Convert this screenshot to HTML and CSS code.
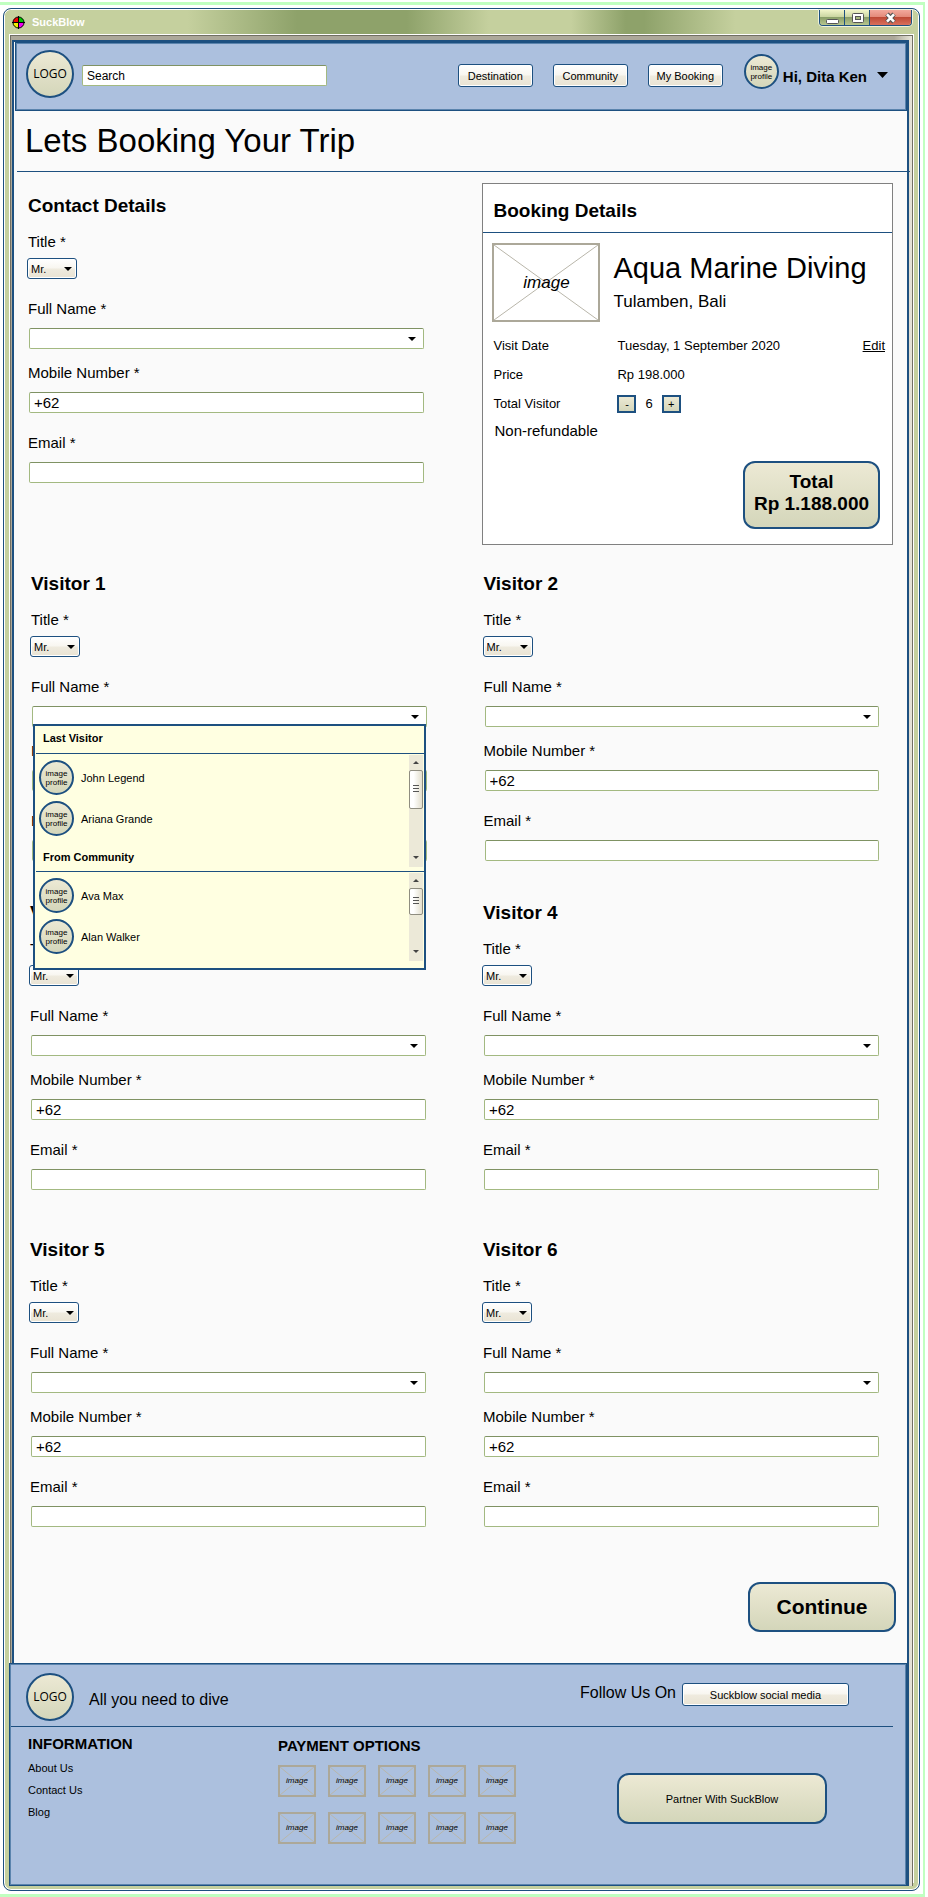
FILE: index.html
```html
<!DOCTYPE html>
<html lang="en">
<head>
<meta charset="utf-8">
<meta name="viewport" content="width=device-width, initial-scale=1">
<title>SuckBlow</title>
<link rel="stylesheet" href="styles.css">
</head>
<body>
<div class="canvas">
<div class="window">
  <div class="titlebar">
    <svg class="app-icon" width="13" height="13" viewBox="0 0 13 13" aria-hidden="true">
      <path d="M6.5 6.5V1A5.5 5.5 0 0 0 1 6.5Z" fill="#f00000"/>
      <path d="M6.5 6.5V1A5.5 5.5 0 0 1 12 6.5Z" fill="#00c800"/>
      <path d="M6.5 6.5V12A5.5 5.5 0 0 1 1 6.5Z" fill="#f0f000"/>
      <path d="M6.5 6.5V12A5.5 5.5 0 0 0 12 6.5Z" fill="#f000f0"/>
      <circle cx="6.5" cy="6.5" r="5.5" fill="none" stroke="#000"/>
      <path d="M6.5 0V13M0 6.5H13" stroke="#000"/>
    </svg>
    <span class="window-title">SuckBlow</span>
    <div class="window-buttons">
      <button class="wbtn" type="button" aria-label="Minimize"><svg width="13" height="13" viewBox="0 0 13 13"><rect x=".5" y="8.5" width="12" height="4" rx="1" fill="#fff" stroke="#555"/></svg></button>
      <button class="wbtn" type="button" aria-label="Maximize"><svg width="13" height="13" viewBox="0 0 13 13"><rect x="1.5" y="2.5" width="11" height="9" rx="1" fill="#fff" stroke="#555"/><rect x="4.5" y="5.500" width="5" height="3" fill="#a9b97f" stroke="#555"/></svg></button>
      <button class="wbtn wbtn-close" type="button" aria-label="Close"><svg width="13" height="13" viewBox="0 0 13 13"><path d="M3 3l7 8M10 3l-7 8" stroke="#555" stroke-width="4.600"/><path d="M3 3.400l7 7.200M10 3.400l-7 7.200" stroke="#fff" stroke-width="2.600"/></svg></button>
    </div>
  </div>

  <div class="frame"><div class="bevel"><div class="page">
    <header class="header">
      <a class="logo" href="#">LOGO</a>
      <input class="field search" type="text" value="Search" aria-label="Search">
      <nav class="nav">
        <button class="btn" type="button">Destination</button>
        <button class="btn" type="button">Community</button>
        <button class="btn" type="button">My Booking</button>
      </nav>
      <span class="avatar header-avatar">image<br>profile</span>
      <button class="account" type="button">Hi, Dita Ken <svg width="11" height="6" viewBox="0 0 11 6" aria-hidden="true"><path d="M0 0H11L5.500 6Z"/></svg></button>
    </header>

    <h1 class="page-title">Lets Booking Your Trip</h1>

    <main>
      <div class="overview">
        <section class="group">
          <h2>Contact Details</h2>
          <label for="c-title">Title *</label>
          <span class="pick pick-small"><select id="c-title"><option>Mr.</option></select></span>
          <label for="c-name">Full Name *</label>
          <span class="pick"><select id="c-name" class="field"><option></option></select></span>
          <label class="near" for="c-mobile">Mobile Number *</label>
          <input class="field" id="c-mobile" type="tel" value="+62">
          <label for="c-email">Email *</label>
          <input class="field" id="c-email" type="email">
        </section>

        <section class="card">
          <h2>Booking Details</h2>
          <div class="card-body">
            <div class="product">
              <div class="placeholder product-image"><svg aria-hidden="true"><line x1="0" y1="0" x2="100%" y2="100%"/><line x1="0" y1="100%" x2="100%" y2="0"/></svg><span>image</span></div>
              <div class="product-text">
                <h3>Aqua Marine Diving</h3>
                <p>Tulamben, Bali</p>
              </div>
            </div>
            <dl class="details">
              <dt>Visit Date</dt><dd>Tuesday, 1 September 2020 <a href="#">Edit</a></dd>
              <dt>Price</dt><dd>Rp 198.000</dd>
              <dt>Total Visitor</dt><dd class="stepper"><button type="button" aria-label="Fewer">-</button><span>6</span><button type="button" aria-label="More">+</button></dd>
            </dl>
            <p class="note">Non-refundable</p>
            <div class="plate total">Total<br>Rp 1.188.000</div>
          </div>
        </section>
      </div>

      <div class="visitors">
        <section class="group">
          <h2>Visitor 1</h2>
          <label for="v1-title">Title *</label>
          <span class="pick pick-small"><select id="v1-title"><option>Mr.</option></select></span>
          <label for="v1-name">Full Name *</label>
          <div class="with-menu">
            <span class="pick"><select id="v1-name" class="field"><option></option></select></span>
            <div class="menu">
              <h3>Last Visitor</h3>
              <div class="menu-row">
                <div class="menu-list">
                  <ul>
                    <li><span class="avatar">image<br>profile</span>John Legend</li>
                    <li><span class="avatar">image<br>profile</span>Ariana Grande</li>
                  </ul>
                  <h3>From Community</h3>
                </div>
                <div class="scrollbar"><i class="up"></i><i class="thumb"></i><i class="down"></i></div>
              </div>
              <div class="menu-row menu-row-last">
                <div class="menu-list">
                  <ul>
                    <li><span class="avatar">image<br>profile</span>Ava Max</li>
                    <li><span class="avatar">image<br>profile</span>Alan Walker</li>
                  </ul>
                </div>
                <div class="scrollbar scrollbar-short"><i class="up"></i><i class="thumb"></i><i class="down"></i></div>
              </div>
            </div>
          </div>
          <label class="near" for="v1-mobile">Mobile Number *</label>
          <input class="field" id="v1-mobile" type="tel" value="+62">
          <label for="v1-email">Email *</label>
          <input class="field" id="v1-email" type="email">
        </section>
        <section class="group">
          <h2>Visitor 2</h2>
          <label for="v2-title">Title *</label>
          <span class="pick pick-small"><select id="v2-title"><option>Mr.</option></select></span>
          <label for="v2-name">Full Name *</label>
          <span class="pick"><select id="v2-name" class="field"><option></option></select></span>
          <label class="near" for="v2-mobile">Mobile Number *</label>
          <input class="field" id="v2-mobile" type="tel" value="+62">
          <label for="v2-email">Email *</label>
          <input class="field" id="v2-email" type="email">
        </section>
      </div>

      <div class="visitors visitors-mid">
        <section class="group">
          <h2>Visitor 3</h2>
          <label for="v3-title">Title *</label>
          <span class="pick pick-small"><select id="v3-title"><option>Mr.</option></select></span>
          <label for="v3-name">Full Name *</label>
          <span class="pick"><select id="v3-name" class="field"><option></option></select></span>
          <label class="near" for="v3-mobile">Mobile Number *</label>
          <input class="field" id="v3-mobile" type="tel" value="+62">
          <label for="v3-email">Email *</label>
          <input class="field" id="v3-email" type="email">
        </section>
        <section class="group">
          <h2>Visitor 4</h2>
          <label for="v4-title">Title *</label>
          <span class="pick pick-small"><select id="v4-title"><option>Mr.</option></select></span>
          <label for="v4-name">Full Name *</label>
          <span class="pick"><select id="v4-name" class="field"><option></option></select></span>
          <label class="near" for="v4-mobile">Mobile Number *</label>
          <input class="field" id="v4-mobile" type="tel" value="+62">
          <label for="v4-email">Email *</label>
          <input class="field" id="v4-email" type="email">
        </section>
      </div>

      <div class="visitors visitors-last">
        <section class="group">
          <h2>Visitor 5</h2>
          <label for="v5-title">Title *</label>
          <span class="pick pick-small"><select id="v5-title"><option>Mr.</option></select></span>
          <label for="v5-name">Full Name *</label>
          <span class="pick"><select id="v5-name" class="field"><option></option></select></span>
          <label class="near" for="v5-mobile">Mobile Number *</label>
          <input class="field" id="v5-mobile" type="tel" value="+62">
          <label for="v5-email">Email *</label>
          <input class="field" id="v5-email" type="email">
        </section>
        <section class="group">
          <h2>Visitor 6</h2>
          <label for="v6-title">Title *</label>
          <span class="pick pick-small"><select id="v6-title"><option>Mr.</option></select></span>
          <label for="v6-name">Full Name *</label>
          <span class="pick"><select id="v6-name" class="field"><option></option></select></span>
          <label class="near" for="v6-mobile">Mobile Number *</label>
          <input class="field" id="v6-mobile" type="tel" value="+62">
          <label for="v6-email">Email *</label>
          <input class="field" id="v6-email" type="email">
        </section>
      </div>

      <div class="actions"><button class="plate continue" type="button">Continue</button></div>
    </main>

    <footer class="footer">
      <div class="footer-top">
        <a class="logo" href="#">LOGO</a>
        <p class="tagline">All you need to dive</p>
        <p class="follow">Follow Us On</p>
        <button class="btn btn-social" type="button">Suckblow social media</button>
      </div>
      <div class="footer-main">
        <nav class="info">
          <h3>INFORMATION</h3>
          <a href="#">About Us</a>
          <a href="#">Contact Us</a>
          <a href="#">Blog</a>
        </nav>
        <section class="payment">
          <h3>PAYMENT OPTIONS</h3>
          <div class="payment-grid">
            <div class="placeholder"><svg aria-hidden="true"><line x1="0" y1="0" x2="100%" y2="100%"/><line x1="0" y1="100%" x2="100%" y2="0"/></svg><span>image</span></div>
            <div class="placeholder"><svg aria-hidden="true"><line x1="0" y1="0" x2="100%" y2="100%"/><line x1="0" y1="100%" x2="100%" y2="0"/></svg><span>image</span></div>
            <div class="placeholder"><svg aria-hidden="true"><line x1="0" y1="0" x2="100%" y2="100%"/><line x1="0" y1="100%" x2="100%" y2="0"/></svg><span>image</span></div>
            <div class="placeholder"><svg aria-hidden="true"><line x1="0" y1="0" x2="100%" y2="100%"/><line x1="0" y1="100%" x2="100%" y2="0"/></svg><span>image</span></div>
            <div class="placeholder"><svg aria-hidden="true"><line x1="0" y1="0" x2="100%" y2="100%"/><line x1="0" y1="100%" x2="100%" y2="0"/></svg><span>image</span></div>
            <div class="placeholder"><svg aria-hidden="true"><line x1="0" y1="0" x2="100%" y2="100%"/><line x1="0" y1="100%" x2="100%" y2="0"/></svg><span>image</span></div>
            <div class="placeholder"><svg aria-hidden="true"><line x1="0" y1="0" x2="100%" y2="100%"/><line x1="0" y1="100%" x2="100%" y2="0"/></svg><span>image</span></div>
            <div class="placeholder"><svg aria-hidden="true"><line x1="0" y1="0" x2="100%" y2="100%"/><line x1="0" y1="100%" x2="100%" y2="0"/></svg><span>image</span></div>
            <div class="placeholder"><svg aria-hidden="true"><line x1="0" y1="0" x2="100%" y2="100%"/><line x1="0" y1="100%" x2="100%" y2="0"/></svg><span>image</span></div>
            <div class="placeholder"><svg aria-hidden="true"><line x1="0" y1="0" x2="100%" y2="100%"/><line x1="0" y1="100%" x2="100%" y2="0"/></svg><span>image</span></div>
          </div>
        </section>
        <button class="plate partner" type="button">Partner With SuckBlow</button>
      </div>
    </footer>
  </div></div></div>
</div>
</div>
</body>
</html>
```
FILE: styles.css
```css
:root {
  --navy: #1d5080;
  --navy-soft: #5b84ad;
  --olive: #c5d09e;
  --blue: #acc0de;
  --stone: #aca899;
  --beige: linear-gradient(#ece9d4, #d4d6ba);
  --button: linear-gradient(#fff 0%, #f8f6f0 48%, #efebdf 52%, #e9e3d3 100%);
}

* { box-sizing: border-box; }

body {
  margin: 0;
  background: #fff;
  color: #000;
  font-family: "Liberation Sans", Arial, sans-serif;
  font-size: 15px;
  line-height: 20px;
}

h1, h2, h3, p, dl, dd, ul { margin: 0; padding: 0; }
ul { list-style: none; }
button, input, select { margin: 0; color: inherit; font: inherit; }
a { color: inherit; text-decoration: none; }

/* window chrome */
.canvas {
  margin: 2px 3px 0 0;
  padding: 3px;
  border: 3px solid #c0ffc0;
  border-left: 0;
  border-right-width: 2px;
}

.window {
  padding: 1px;
  border: 1px solid var(--navy);
  border-radius: 8px;
  background: var(--olive);
  box-shadow: inset 0 0 0 1px #fff;
}

.titlebar {
  display: flex;
  align-items: center;
  height: 24px;
  padding: 0 6px 0 7px;
  border-radius: 6px 6px 0 0;
  background: linear-gradient(90deg, var(--olive) 0 20%, #8ea26a 32% 44%, var(--olive) 53% 62%, #8ea26a 68% 70%, var(--olive) 80%);
}

.window-title {
  margin-left: 7px;
  color: #fff;
  font-size: 11px;
  font-weight: bold;
}

.window-buttons {
  display: flex;
  align-self: flex-start;
  margin-left: auto;
  border: 1px solid var(--navy);
  border-top: 0;
  border-radius: 0 0 4px 4px;
  overflow: hidden;
  box-shadow: 0 0 0 1px #eef2dc;
}

.wbtn {
  display: grid;
  place-items: center;
  width: 25px;
  height: 15px;
  padding: 0;
  border: 0;
  border-right: 1px solid var(--navy);
  background: linear-gradient(#f1f5c9 0%, #cbd6a2 45%, #8ba069 50%, #b7c68e 100%);
}

.wbtn-close {
  width: 41px;
  border-right: 0;
  background: linear-gradient(#f2a99c 0%, #e48a7a 45%, #bf4a36 50%, #d9705c 100%);
}

.frame {
  margin: 0 4px 6px;
  border: 1px solid #fff;
}

.bevel {
  padding: 4px 3px 0 1px;
  border: 1px solid #716f64;
  border-bottom: 0;
  background: linear-gradient(90deg, var(--stone) 98%, #e8e6da);
}

.page {
  border: 2px solid var(--navy);
  border-bottom: 0;
  background: #fafafa;
}

/* shared controls */
.logo, .avatar {
  display: grid;
  flex: none;
  place-items: center;
  border: 2px solid var(--navy);
  border-radius: 50%;
  background: var(--beige);
  text-align: center;
}

.logo {
  width: 48px;
  height: 48px;
  font-family: "Open Sans", sans-serif;
  font-size: 12px;
}

.avatar {
  width: 35px;
  height: 35px;
  font-size: 8px;
  line-height: 9px;
}

.btn {
  width: 75px;
  height: 23px;
  padding: 0;
  border: 1px solid var(--navy);
  border-radius: 3px;
  background: var(--button);
  box-shadow: inset 0 0 0 1px #fff;
  font-size: 11px;
}

.plate {
  border: 2px solid var(--navy);
  border-radius: 12px;
  background: var(--beige);
  text-align: center;
}

.field {
  width: 100%;
  height: 21px;
  padding: 0 4px;
  border: 1px solid #a3b981;
  border-top-color: #7f9263;
  border-radius: 2px;
  background: #fff;
}

.pick {
  display: grid;
  align-items: center;
}

.pick select, .pick::after { grid-area: 1 / 1; }

.pick select {
  appearance: none;
  border-radius: 2px;
}

.pick::after {
  content: "";
  justify-self: end;
  margin-right: 8px;
  border: 4px solid transparent;
  border-top-color: #000;
  border-bottom: 0;
  pointer-events: none;
}

.pick-small { width: 50px; }
.pick-small::after { margin-right: 5px; }

.pick-small select {
  height: 21px;
  padding: 0 3px;
  border: 1px solid var(--navy);
  border-radius: 3px;
  background: var(--button);
  box-shadow: inset 0 0 0 1px #fff;
  font-size: 11px;
}

.placeholder {
  display: grid;
  place-items: center;
  border: 2px solid var(--stone);
  font-size: 8px;
  font-style: italic;
}

.placeholder svg, .placeholder span { grid-area: 1 / 1; }
.placeholder svg { width: 100%; height: 100%; }
.placeholder line { stroke: #b9b6aa; }

/* header */
.header {
  display: flex;
  align-items: center;
  height: 69px;
  margin-left: 1px;
  padding: 0 18px 6px 10px;
  border: 1px solid var(--navy);
  background: var(--blue);
  box-shadow: inset 0 0 0 1px var(--navy-soft);
}

.search {
  width: 245px;
  margin: 4px 20px 0 8px;
  font-size: 12px;
}

.nav {
  display: flex;
  gap: 20px;
  margin: 4px 21px 0 auto;
}

.header-avatar { margin-bottom: 4px; }

.account {
  display: flex;
  align-items: center;
  gap: 10px;
  margin-top: 6px;
  padding: 0 0 0 4px;
  border: 0;
  background: none;
  font-weight: bold;
}

.account svg { margin-bottom: 4px; }

.page-title {
  margin: 0 -3px 0 3px;
  padding: 12px 8px;
  border-bottom: 1px solid var(--navy);
  font-size: 33px;
  font-weight: normal;
  line-height: 36px;
}

/* forms */
.overview {
  display: grid;
  grid-template-columns: 397fr 410fr;
  gap: 58px;
  padding: 11px 14px 27px 13px;
}

.overview .group { padding-top: 11px; }

.visitors {
  display: grid;
  grid-template-columns: 1fr 1fr;
  gap: 56px;
  padding: 0 28px 0 16px;
}

.visitors-mid { padding-top: 40px; padding-left: 15px; }
.visitors-last { padding-top: 48px; padding-left: 15px; }

.group {
  display: flex;
  flex-direction: column;
}

h2 {
  font-size: 19px;
  line-height: 24px;
}

.group h2, .group label { padding-left: 1px; }
.group h2 { margin-bottom: 14px; }
.group label { margin-bottom: 9px; }
.group h2 + label { margin-bottom: 6px; }
.group label:not(h2 + label) { margin-top: 20px; }
.group label.near:not(h2 + label) { margin-top: 14px; }
.group > .field, .group > .pick:not(.pick-small), .with-menu { margin-left: 2px; width: auto; }

/* visitor picker */
.with-menu { position: relative; }

.menu {
  position: absolute;
  z-index: 2;
  top: 18px;
  right: 1px;
  left: 1px;
  border: 2px solid var(--navy);
  background: #ffffe1;
  font-size: 11px;
}

.menu h3 {
  padding: 2px 8px 5px;
  font-size: 11px;
  line-height: 20px;
}

.menu-row {
  display: flex;
  justify-content: space-between;
  margin-left: 1px;
  padding: 1px 1px 4px 0;
  border-top: 1px solid var(--navy);
}

.menu-row-last { padding-bottom: 7px; }

.menu-list ul {
  display: grid;
  gap: 6px;
  padding: 5px 0 3px 3px;
}

.menu-list li {
  display: flex;
  align-items: center;
  gap: 7px;
}

.menu-list h3 { padding: 8px 7px 0; }

.scrollbar {
  display: flex;
  flex-direction: column;
  align-items: center;
  width: 14px;
  height: 112px;
  background: #ece9d8;
}

.scrollbar-short { height: 88px; }

.up, .down { border: 3px solid transparent; }
.up { margin: 6px 0; border-top: 0; border-bottom-color: #444; }
.down { margin: auto 0 8px; border-bottom: 0; border-top-color: #444; }

.thumb {
  width: 14px;
  height: 39px;
  border: 1px solid #8f8d80;
  border-radius: 2px;
  background:
    repeating-linear-gradient(#555 0 1px, transparent 1px 3px) center / 6px 9px no-repeat,
    linear-gradient(90deg, #fff 30%, #e3dfcd);
}

.scrollbar-short .thumb { height: 27px; }

/* booking summary */
.card {
  border: 1px solid #808080;
  background: #fff;
}

.card h2 {
  padding: 15px 10px 9px;
  border-bottom: 1px solid var(--navy);
}

.card-body { padding: 10px 7px 15px 9px; }

.product { display: flex; gap: 13px; }

.product-image {
  flex: none;
  width: 108px;
  height: 79px;
  font-size: 17px;
}

.product-text { padding-top: 9px; }

.product h3 {
  margin-bottom: 8px;
  font-size: 29px;
  font-weight: normal;
  line-height: 32px;
  white-space: nowrap;
}

.product p { font-size: 17px; }

.details {
  display: grid;
  grid-template-columns: 124px 1fr;
  gap: 9px 0;
  margin: 14px 0 7px 1px;
  font-size: 13px;
}

.details dd {
  display: flex;
  justify-content: space-between;
}

.details a { text-decoration: underline; }

.details .stepper {
  align-items: center;
  justify-content: flex-start;
  gap: 9px;
}

.stepper button {
  width: 19px;
  height: 18px;
  padding: 0;
  border: 2px solid var(--navy);
  background: var(--beige);
  font-size: 11px;
  line-height: 14px;
}

.note { padding-left: 2px; }

.total {
  width: 137px;
  margin: 20px 5px 0 auto;
  padding: 8px 0 12px;
  font-size: 19px;
  font-weight: bold;
  line-height: 22px;
}

.actions {
  display: flex;
  justify-content: flex-end;
  padding: 55px 11px 31px;
}

.continue {
  width: 148px;
  height: 50px;
  font-size: 21px;
  font-weight: bold;
}

/* footer */
.footer {
  position: relative;
  margin: 0 0 -4px -5px;
  padding-bottom: 41px;
  border: 1px solid var(--navy);
  background: var(--blue);
  box-shadow: inset 0 0 0 1px var(--navy-soft);
}

.footer-top {
  display: flex;
  align-items: center;
  margin: 1px 13px 0 1px;
  padding: 8px 44px 5px 15px;
  border-bottom: 1px solid var(--navy);
  font-size: 16px;
}

.tagline { margin: 5px 0 0 15px; }
.follow { margin: 0 6px 9px auto; }
.btn-social { width: 167px; margin-bottom: 5px; }

.footer-main {
  display: grid;
  grid-template-columns: 250px 1fr 210px;
  align-items: start;
  padding: 7px 79px 0 18px;
}

.footer-main h3 { font-size: 15px; }

.info {
  display: flex;
  flex-direction: column;
  align-items: flex-start;
  gap: 6px;
  font-size: 11px;
  line-height: 16px;
}

.info h3 { line-height: 20px; }

.payment { padding-top: 2px; }

.payment-grid {
  display: grid;
  grid-template-columns: repeat(5, 38px);
  grid-auto-rows: 32px;
  gap: 15px 12px;
  margin-top: 9px;
}

.partner {
  height: 51px;
  margin-top: 39px;
  font-size: 11px;
}
```
